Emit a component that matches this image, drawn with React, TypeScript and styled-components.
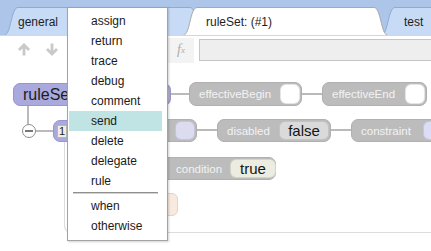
import React from "react";
import styled, { createGlobalStyle } from "styled-components";

const GlobalStyle = createGlobalStyle`
  html, body {
    margin: 0;
    padding: 0;
    background: #ffffff;
  }
  body {
    font-family: "Liberation Sans", Arial, sans-serif;
    overflow: hidden;
  }
`;

const CANVAS_TOP = 63;

const Page = styled.div`
  position: relative;
  width: 431px;
  height: 251px;
  overflow: hidden;
  display: flex;
  flex-direction: column;
  background: #ffffff;
`;

/* ---------- tabs ---------- */

const TabBar = styled.div`
  height: 35px;
  flex: none;
  display: flex;
  align-items: flex-end;
  padding-left: 4px;
  background: #adc5e8;
  border-bottom: 1px solid #d6d6d6;
`;

const Tab = styled.div<{ $w: number; $shift: number; $z: number }>`
  position: relative;
  flex: none;
  width: ${(p) => p.$w}px;
  height: 28px;
  margin-left: ${(p) => p.$shift}px;
  z-index: ${(p) => p.$z};
`;

const TabShape = styled.svg`
  position: absolute;
  inset: 0;
`;

const TabLabel = styled.span<{ $pad: number }>`
  position: relative;
  display: block;
  padding-left: ${(p) => p.$pad}px;
  line-height: 30px;
  font-size: 12px;
  color: #1e1e1e;
  white-space: nowrap;
`;

type TabDef = { label: string; w: number; shift: number; pad: number; active?: boolean; z: number };

const tabs: TabDef[] = [
  { label: "general", w: 200, shift: 0, pad: 14, z: 1 },
  { label: "ruleSet: (#1)", w: 205, shift: -21, pad: 23, active: true, z: 3 },
  { label: "test", w: 90, shift: -7, pad: 23, z: 2 },
];

function TabItem({ t }: { t: TabDef }) {
  const w = t.w;
  const d = `M0.5,28 C7,28 7,0.5 14,0.5 L${w - 14},0.5 C${w - 7},0.5 ${w - 7},28 ${w - 0.5},28`;
  return (
    <Tab $w={w} $shift={t.shift} $z={t.z}>
      <TabShape width={w} height={28} viewBox={`0 0 ${w} 28`}>
        <path
          d={d}
          fill={t.active ? "#ffffff" : "#c7dbf6"}
          stroke={t.active ? "#a9a9a9" : "#8eabd3"}
          strokeWidth={1}
        />
      </TabShape>
      <TabLabel $pad={t.pad}>{t.label}</TabLabel>
    </Tab>
  );
}

/* ---------- toolbar ---------- */

const Toolbar = styled.div`
  height: 27px;
  flex: none;
  display: flex;
  align-items: center;
  padding-left: 18px;
  background: #ffffff;
`;

const ToolIcon = styled.svg<{ $gap: number }>`
  flex: none;
  margin-right: ${(p) => p.$gap}px;
`;

const FxButton = styled.div`
  flex: none;
  width: 26px;
  height: 25px;
  margin-top: 1px;
  display: flex;
  align-items: center;
  justify-content: center;
  background: #f3f3f3;
  font-family: "Liberation Serif", "Times New Roman", serif;
  font-style: italic;
  font-size: 14px;
  color: #adadad;

  sub {
    font-size: 9px;
    vertical-align: -2px;
  }
`;

const FormulaInput = styled.div`
  flex: 1;
  height: 20px;
  margin-left: 5px;
  margin-right: -6px;
  background: #eeeeee;
  border: 1px solid #c6c6c6;
`;

/* ---------- canvas ---------- */

const Canvas = styled.div`
  position: relative;
  flex: 1;
  background: #ffffff;
`;

const Wires = styled.svg`
  position: absolute;
  left: 0;
  top: 0;
`;

const Container = styled.div<{ $x: number; $y: number; $bottom: number }>`
  position: absolute;
  left: ${(p) => p.$x}px;
  top: ${(p) => p.$y - CANVAS_TOP}px;
  right: -10px;
  height: ${(p) => p.$bottom - p.$y}px;
  border: 1px solid #dcdcdc;
  border-top: none;
  border-radius: 0 0 0 7px;
`;

type Tone = "grey" | "purple";

const Block = styled.div<{ $x: number; $y: number; $w: number; $h: number; $tone: Tone }>`
  position: absolute;
  left: ${(p) => p.$x}px;
  top: ${(p) => p.$y - CANVAS_TOP}px;
  width: ${(p) => p.$w}px;
  height: ${(p) => p.$h}px;
  box-sizing: border-box;
  display: flex;
  align-items: center;
  gap: 8px;
  padding: 0 1px 0 9px;
  border-radius: 7px;
  background: ${(p) => (p.$tone === "purple" ? "#a9a9de" : "#bcbcbc")};
  border: 1px solid ${(p) => (p.$tone === "purple" ? "#9797cf" : "#b0b0b0")};
  color: ${(p) => (p.$tone === "purple" ? "#1c1c1c" : "#f3f3f3")};
  font-size: ${(p) => (p.$tone === "purple" ? 16 : 11.5)}px;
  white-space: nowrap;
`;

const BlockLabel = styled.span<{ $indent?: number }>`
  flex: 1;
  padding-left: ${(p) => p.$indent ?? 0}px;
`;

const Slot = styled.span<{ $w: number; $fill: string }>`
  flex: none;
  width: ${(p) => p.$w}px;
  align-self: stretch;
  margin: 1px 0;
  box-sizing: border-box;
  display: flex;
  align-items: center;
  justify-content: center;
  border-radius: 6px;
  background: ${(p) => p.$fill};
  border: 1px solid rgba(0, 0, 0, 0.1);
  color: #141414;
  font-size: 15px;
`;

const LooseSlot = styled.div<{ $x: number; $y: number; $w: number; $h: number }>`
  position: absolute;
  left: ${(p) => p.$x}px;
  top: ${(p) => p.$y - CANVAS_TOP}px;
  width: ${(p) => p.$w}px;
  height: ${(p) => p.$h}px;
  box-sizing: border-box;
  border-radius: 6px;
  background: #f9eadf;
  border: 1px solid #e3d3c8;
`;

const Badge = styled.span`
  flex: none;
  width: 10px;
  height: 13px;
  margin-left: -6px;
  box-sizing: border-box;
  display: flex;
  align-items: center;
  justify-content: center;
  background: #efefdf;
  border: 1px solid #b9b9a8;
  font-size: 11px;
  color: #222;
`;

const Toggle = styled.div<{ $x: number; $y: number }>`
  position: absolute;
  left: ${(p) => p.$x - 7}px;
  top: ${(p) => p.$y - CANVAS_TOP - 7}px;
  width: 14px;
  height: 14px;
  box-sizing: border-box;
  border-radius: 50%;
  border: 1.5px solid #8c8c8c;
  background: #ffffff;

  &::after {
    content: "";
    position: absolute;
    left: 2px;
    right: 2px;
    top: 4.5px;
    height: 2px;
    background: #777;
  }
`;

/* ---------- context menu ---------- */

const Menu = styled.div`
  position: absolute;
  left: 67px;
  top: 7px;
  width: 101px;
  height: 234px;
  box-sizing: border-box;
  padding: 3px 5px 4px 1px;
  background: #ffffff;
  border: 1px solid #a3a3a3;
  box-shadow: 1px 1px 2px rgba(0, 0, 0, 0.18);
  z-index: 10;
`;

const MenuItem = styled.div<{ $hot?: boolean }>`
  height: 20px;
  line-height: 20px;
  padding-left: 22px;
  font-size: 12px;
  color: #1a1a1a;
  background: ${(p) => (p.$hot ? "#c0e4e3" : "transparent")};
`;

const MenuSeparator = styled.div`
  height: 5px;
  margin: 0 4px 0 4px;
  box-sizing: border-box;
  padding-top: 1px;

  &::before {
    content: "";
    display: block;
    height: 1px;
    background: #8f8f8f;
    border-bottom: 1px solid #d2d2d2;
  }
`;

const topItems = ["assign", "return", "trace", "debug", "comment", "send", "delete", "delegate", "rule"];
const bottomItems = ["when", "otherwise"];

const wires: [number, number, number, number][] = [
  [28, 105, 28, 124],
  [36, 131, 53, 131],
  [171, 94, 189, 94],
  [302, 94, 322, 94],
  [197, 130, 217, 130],
  [331, 130, 351, 130],
];

export default function App() {
  return (
    <Page>
      <GlobalStyle />
      <TabBar>
        {tabs.map((t) => (
          <TabItem key={t.label} t={t} />
        ))}
      </TabBar>

      <Toolbar>
        <ToolIcon $gap={16} width={12} height={13} viewBox="0 0 12 13">
          <path d="M6 12.5V2M1 7L6 2L11 7" fill="none" stroke="#c9c9c9" strokeWidth={2.8} />
        </ToolIcon>
        <ToolIcon $gap={94} width={12} height={13} viewBox="0 0 12 13">
          <path d="M6 0.5V11M1 6L6 11L11 6" fill="none" stroke="#c9c9c9" strokeWidth={2.8} />
        </ToolIcon>
        <ToolIcon $gap={4} width={12} height={12} viewBox="0 0 12 12">
          <circle cx={6} cy={6} r={4.5} fill="none" stroke="#c9c9c9" strokeWidth={2} />
        </ToolIcon>
        <FxButton>
          f<sub>x</sub>
        </FxButton>
        <FormulaInput />
      </Toolbar>

      <Canvas>
        <Wires width={431} height={188}>
          {wires.map(([x1, y1, x2, y2], i) => (
            <line
              key={i}
              x1={x1}
              y1={y1 - CANVAS_TOP}
              x2={x2}
              y2={y2 - CANVAS_TOP}
              stroke="#a3a3a3"
              strokeWidth={1.5}
            />
          ))}
        </Wires>

        <Container $x={64} $y={142} $bottom={232} />

        <Block $x={13} $y={83} $w={158} $h={23} $tone="purple">
          <BlockLabel>ruleSet</BlockLabel>
          <Slot $w={22} $fill="#d2d2d2" />
        </Block>
        <Block $x={189} $y={82} $w={113} $h={24} $tone="grey">
          <BlockLabel>effectiveBegin</BlockLabel>
          <Slot $w={20} $fill="#ffffff" />
        </Block>
        <Block $x={322} $y={82} $w={105} $h={24} $tone="grey">
          <BlockLabel>effectiveEnd</BlockLabel>
          <Slot $w={20} $fill="#ffffff" />
        </Block>

        <Toggle $x={29} $y={131} />
        <Block $x={53} $y={120} $w={110} $h={22} $tone="purple">
          <Badge>1</Badge>
        </Block>
        <Block $x={140} $y={119} $w={57} $h={23} $tone="grey">
          <BlockLabel />
          <Slot $w={20} $fill="#dcdcf0" />
        </Block>
        <Block $x={217} $y={119} $w={114} $h={23} $tone="grey">
          <BlockLabel>disabled</BlockLabel>
          <Slot $w={50} $fill="#dadada">false</Slot>
        </Block>
        <Block $x={351} $y={119} $w={100} $h={23} $tone="grey">
          <BlockLabel>constraint</BlockLabel>
          <Slot $w={26} $fill="#dcdcf6" />
        </Block>

        <Block $x={140} $y={157} $w={136} $h={23} $tone="grey">
          <BlockLabel $indent={26}>condition</BlockLabel>
          <Slot $w={46} $fill="#edece1">true</Slot>
        </Block>

        <LooseSlot $x={150} $y={193} $w={28} $h={23} />
      </Canvas>

      <Menu>
        {topItems.map((m) => (
          <MenuItem key={m} $hot={m === "send"}>
            {m}
          </MenuItem>
        ))}
        <MenuSeparator />
        {bottomItems.map((m) => (
          <MenuItem key={m}>{m}</MenuItem>
        ))}
      </Menu>
    </Page>
  );
}
